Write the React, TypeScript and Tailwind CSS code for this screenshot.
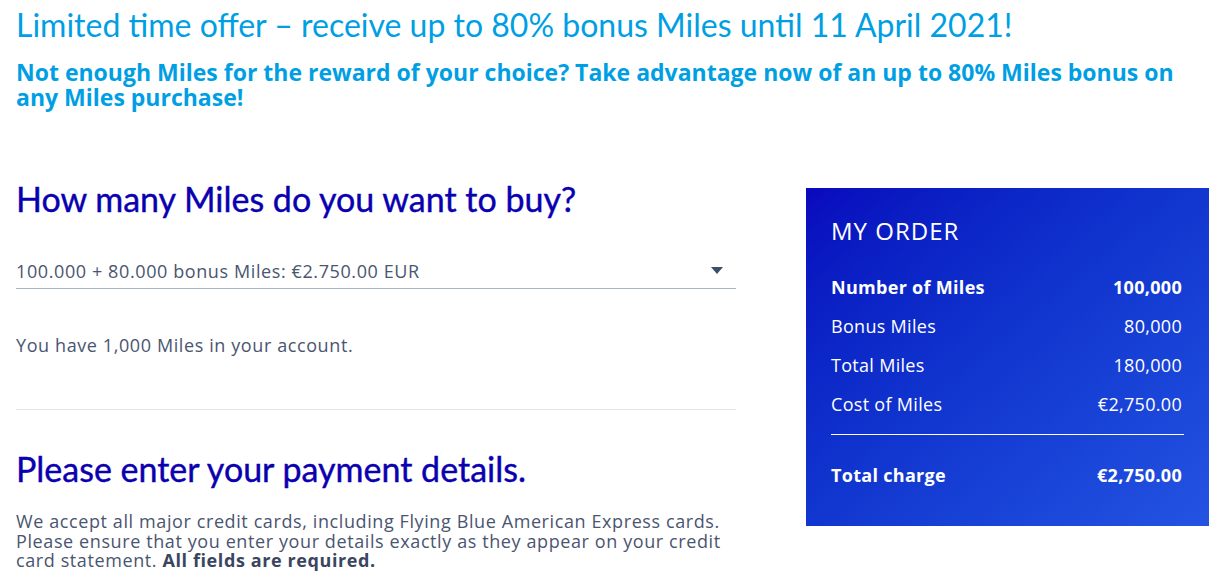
const rows = [
  { label: "Number of Miles", value: "100,000", bold: true },
  { label: "Bonus Miles", value: "80,000" },
  { label: "Total Miles", value: "180,000" },
  { label: "Cost of Miles", value: "€2,750.00" },
];

const OrderPanel = () => (
  <aside className="w-[403px] h-[338px] bg-gradient-to-br from-[#0a08bd] to-[#2453e2] text-white pl-[25px] pr-[27px] pt-[28px] font-['Open_Sans',sans-serif]">
    <h3 className="text-[24px] leading-[30px] tracking-[1px] mb-[29px]">MY ORDER</h3>
    <div className="flex flex-col gap-[15px]">
      {rows.map((r) => (
        <div
          key={r.label}
          className={`flex justify-between text-[18px] leading-[24px] tracking-[0.3px] ${r.bold ? "font-bold" : ""}`}
        >
          <span>{r.label}</span>
          <span>{r.value}</span>
        </div>
      ))}
    </div>
    <div className="border-t border-white mt-[18px] mb-[28px] -mr-[2px]" />
    <div className="flex justify-between text-[18px] leading-[24px] tracking-[0.3px] font-bold">
      <span>Total charge</span>
      <span>€2,750.00</span>
    </div>
  </aside>
);

export default function App() {
  return (
    <div className="bg-white min-h-[579px] pl-4 pr-2 font-['Lato',sans-serif]">
      <h1 className="text-[#009fe3] text-[32px] leading-[36px] pt-[7px]">
        Limited time offer – receive up to 80% bonus Miles until 11 April 2021!
      </h1>
      <p className="text-[#009fe3] text-[23px] leading-[25px] font-bold mt-[17px] max-w-[1185px] font-['Open_Sans',sans-serif]">
        Not enough Miles for the reward of your choice? Take advantage now of an up to 80% Miles bonus on any Miles purchase!
      </p>

      <div className="flex justify-between mt-[78px]">
        <div className="w-[720px]">
          <h2 className="text-[#0a00b0] text-[34px] leading-[36px] -mt-[7px] [-webkit-text-stroke:0.4px_#0a00b0]">
            How many Miles do you want to buy?
          </h2>
          <div className="mt-[43px] flex items-center justify-between border-b border-[#a8b3c4] pb-[6px] text-[#4a5570] text-[18px] leading-[22px] tracking-[0.6px] font-['Open_Sans',sans-serif]">
            <span>100.000 + 80.000 bonus Miles: €2.750.00 EUR</span>
            <svg width="12" height="8" viewBox="0 0 12 8" className="mr-[13px]">
              <path d="M0 0h12L6 7z" fill="#3d4e6b" />
            </svg>
          </div>
          <p className="mt-[45px] text-[#4a5570] text-[18px] leading-[22px] tracking-[0.6px] font-['Open_Sans',sans-serif]">
            You have 1,000 Miles in your account.
          </p>
          <div className="border-t border-[#e3e6ea] mt-[53px]" />
          <h2 className="text-[#0a00b0] text-[34px] leading-[36px] mt-[41px] [-webkit-text-stroke:0.4px_#0a00b0]">
            Please enter your payment details.
          </h2>
          <p className="mt-[25px] text-[#4a5570] text-[18px] leading-[19.5px] tracking-[0.6px] font-['Open_Sans',sans-serif]">
            We accept all major credit cards, including Flying Blue American Express cards. Please ensure that you enter your details exactly as they appear on your credit card statement.{" "}
            <span className="font-bold text-[#3a4560]">All fields are required.</span>
          </p>
        </div>
        <OrderPanel />
      </div>
    </div>
  );
}
